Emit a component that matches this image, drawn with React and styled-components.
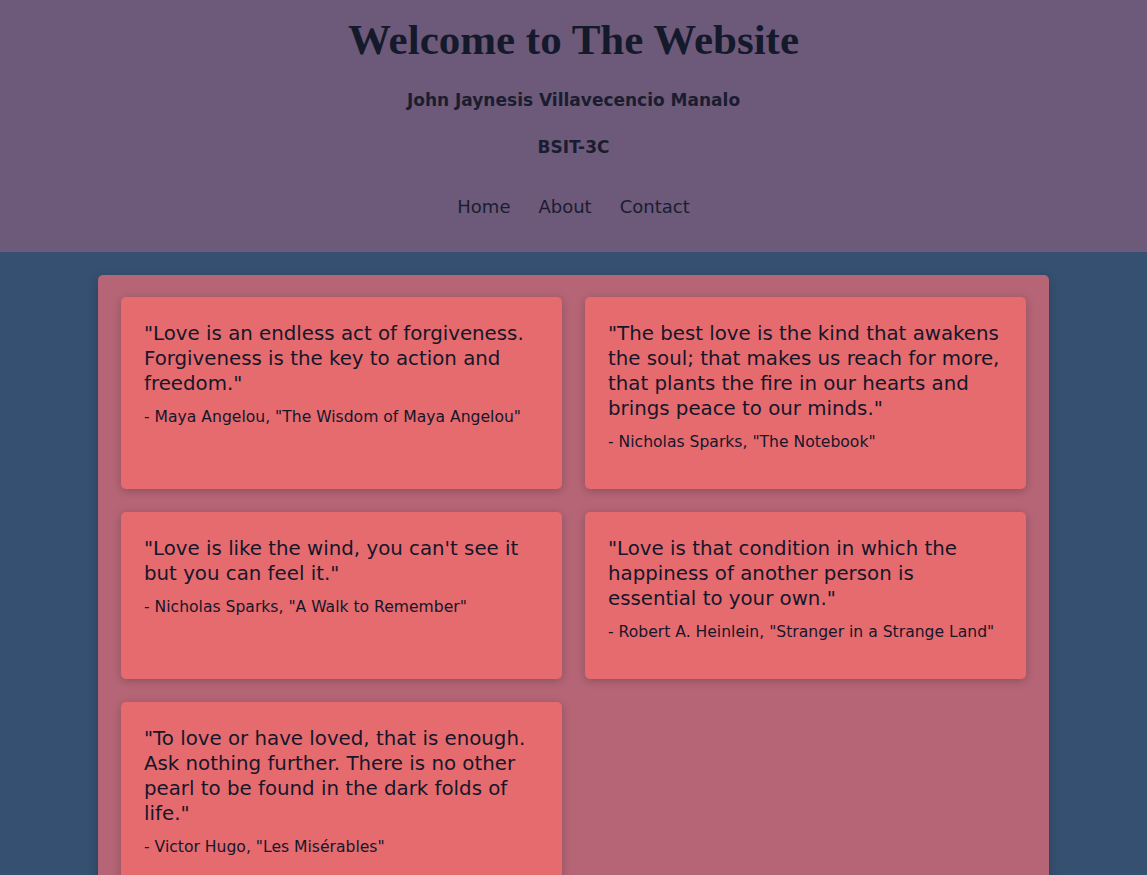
import React from "react";
import styled, { createGlobalStyle } from "styled-components";

const quotes = [
  {
    text: "\"Love is an endless act of forgiveness. Forgiveness is the key to action and freedom.\"",
    author: "- Maya Angelou, \"The Wisdom of Maya Angelou\"",
  },
  {
    text: "\"The best love is the kind that awakens the soul; that makes us reach for more, that plants the fire in our hearts and brings peace to our minds.\"",
    author: "- Nicholas Sparks, \"The Notebook\"",
  },
  {
    text: "\"Love is like the wind, you can't see it but you can feel it.\"",
    author: "- Nicholas Sparks, \"A Walk to Remember\"",
  },
  {
    text: "\"Love is that condition in which the happiness of another person is essential to your own.\"",
    author: "- Robert A. Heinlein, \"Stranger in a Strange Land\"",
  },
  {
    text: "\"To love or have loved, that is enough. Ask nothing further. There is no other pearl to be found in the dark folds of life.\"",
    author: "- Victor Hugo, \"Les Misérables\"",
  },
];

const GlobalStyle = createGlobalStyle`
  * { box-sizing: border-box; }
  body {
    margin: 0;
    background: #355070;
    font-family: "DejaVu Sans", "Noto Sans", sans-serif;
    color: #16162a;
  }
`;

function App() {
  return (
    <>
      <GlobalStyle />
      <Header>
        <Title>Welcome to The Website</Title>
        <SubTitle>John Jaynesis Villavecencio Manalo</SubTitle>
        <SubTitle>BSIT-3C</SubTitle>
        <Nav>
          <NavLink href="#">Home</NavLink>
          <NavLink href="#">About</NavLink>
          <NavLink href="#">Contact</NavLink>
        </Nav>
      </Header>
      <Main>
        <Container>
          {quotes.map((q, i) => (
            <Card key={i}>
              <Quote>{q.text}</Quote>
              <Author>{q.author}</Author>
            </Card>
          ))}
        </Container>
      </Main>
    </>
  );
}

export default App;

const Header = styled.header`
  background: #6d597a;
  height: 252px;
  display: flex;
  flex-direction: column;
  align-items: center;
  padding-top: 14px;
`;
const Title = styled.h1`
  margin: 0;
  font-family: "Liberation Serif", "DejaVu Serif", serif;
  font-weight: 700;
  font-size: 43px;
  line-height: 52px;
  color: #141a2b;
`;
const SubTitle = styled.h3`
  margin: 0;
  margin-top: 22px;
  font-size: 17px;
  line-height: 25px;
  font-weight: 700;
  color: #1a1d30;
`;
const Nav = styled.nav`
  display: flex;
  gap: 28px;
  margin-top: 34px;
`;
const NavLink = styled.a`
  font-size: 18px;
  line-height: 25px;
  color: #1a1d30;
  text-decoration: none;
`;
const Main = styled.main`
  padding-top: 23px;
`;
const Container = styled.div`
  width: 951px;
  margin: 0 auto;
  background: #b56576;
  border-radius: 5px;
  padding: 22px 23px;
  display: grid;
  grid-template-columns: 1fr 1fr;
  gap: 23px;
  box-shadow: 0 4px 12px rgba(0, 0, 0, 0.2);
`;
const Card = styled.div`
  background: #e56b6f;
  border-radius: 5px;
  padding: 24px 23px 34px;
  box-shadow: 0 2px 10px rgba(0, 0, 0, 0.22);
`;
const Quote = styled.p`
  margin: 0;
  font-size: 19.8px;
  line-height: 25px;
  color: #16162a;
`;
const Author = styled.p`
  margin: 9px 0 0;
  font-size: 15.6px;
  line-height: 25px;
  color: #16162a;
`;
